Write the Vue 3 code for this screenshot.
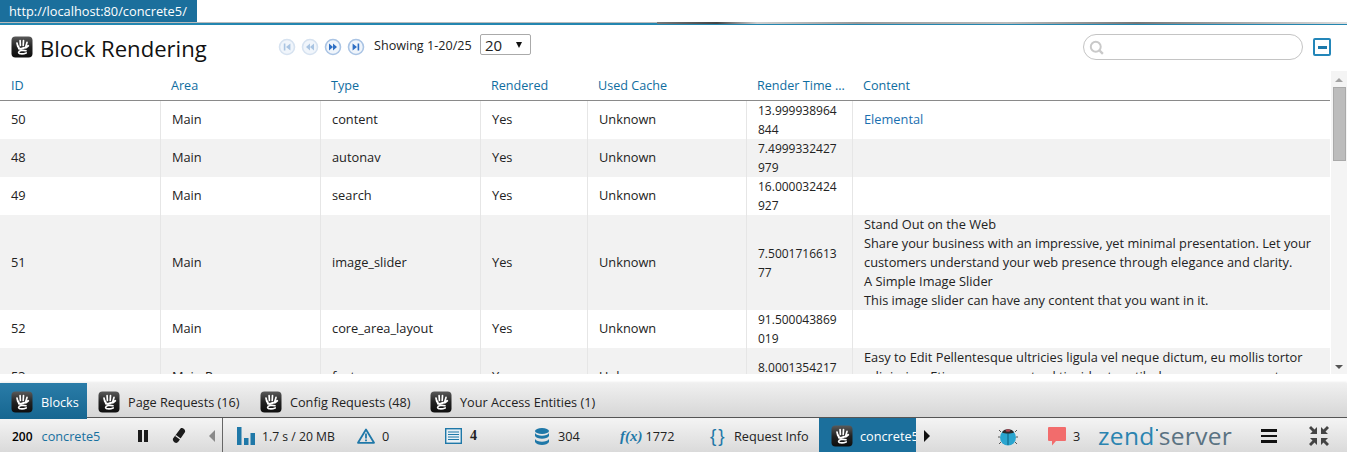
<script setup>
const columns = ['ID', 'Area', 'Type', 'Rendered', 'Used Cache', 'Render Time (ms)', 'Content']
const rows = [
  { id: '50', area: 'Main', type: 'content', time: '13.999938964844', lines: ['Elemental'], link: true },
  { id: '48', area: 'Main', type: 'autonav', time: '7.4999332427979', lines: [] },
  { id: '49', area: 'Main', type: 'search', time: '16.000032424927', lines: [] },
  { id: '51', area: 'Main', type: 'image_slider', time: '7.500171661377', lines: ['Stand Out on the Web', 'Share your business with an impressive, yet minimal presentation. Let your customers understand your web presence through elegance and clarity.', 'A Simple Image Slider', 'This image slider can have any content that you want in it.'] },
  { id: '52', area: 'Main', type: 'core_area_layout', time: '91.500043869019', lines: [] },
  { id: '53', area: 'Main Page', type: 'feature', time: '8.0001354217529', lines: ['Easy to Edit Pellentesque ultricies ligula vel neque dictum, eu mollis tortor adipiscing. Etiam congue, est vel tincidunt vestibulum, nunc nunc porta nulla, at adipiscing neque tellus quis urna.'] },
]
const tabs = ['Blocks', 'Page Requests (16)', 'Config Requests (48)', 'Your Access Entities (1)']
</script>

<template>
  <div class="app">
    <svg class="defs" aria-hidden="true">
      <defs>
        <linearGradient id="c5bg" x1="0" y1="0" x2="0" y2="1">
          <stop offset="0" stop-color="#5a5a5a" />
          <stop offset="0.5" stop-color="#222" />
          <stop offset="1" stop-color="#0d0d0d" />
        </linearGradient>
      </defs>
      <symbol id="c5" viewBox="0 0 22 22">
        <rect x="0.5" y="0.5" width="21" height="21" rx="4" fill="url(#c5bg)" />
        <g fill="none" stroke="#fff" stroke-linecap="round">
          <path d="M6.800 10.500L6 7M9.400 9.500L9.100 4.600M12.200 9.500L12.500 4.600M14.800 10.500L16 6.400" stroke-width="1.700" />
          <path d="M7.400 10.500L8 12.600L10 13L13 11.800L15 11.600L17.200 9.800" stroke-width="2" />
          <path d="M15 14.800C12 14 8 14.500 7.600 16.300C7.400 18 11.600 18.400 15.200 16.900" stroke-width="1.600" />
        </g>
      </symbol>
    </svg>

    <div class="topbar">
      <div class="url">http://localhost:80/concrete5/</div>
      <div class="sliver"></div>
    </div>

    <header class="head">
      <svg class="logo"><use href="#c5" /></svg>
      <h1 class="title">Block Rendering</h1>
      <div class="pager">
        <svg class="pg off" viewBox="0 0 18 18"><circle cx="9" cy="9" r="7.500" /><path d="M5.800 5.500v7h1.600v-7zM12.400 5.500L8 9l4.400 3.500z" /></svg>
        <svg class="pg off" viewBox="0 0 18 18"><circle cx="9" cy="9" r="7.500" /><path d="M9 5.500L5 9l4 3.500zM13 5.500L9 9l4 3.500z" /></svg>
        <svg class="pg" viewBox="0 0 18 18"><circle cx="9" cy="9" r="7.500" /><path d="M5 5.500L9 9l-4 3.500zM9 5.500L13 9l-4 3.500z" /></svg>
        <svg class="pg" viewBox="0 0 18 18"><circle cx="9" cy="9" r="7.500" /><path d="M5.600 5.500L10 9l-4.400 3.500zM10.600 5.500v7h1.600v-7z" /></svg>
      </div>
      <span class="showing">Showing 1-20/25</span>
      <div class="select"><span>20</span><i class="caret"></i></div>
      <div class="search">
        <svg class="glass" viewBox="0 0 18 18" fill="none" stroke="#c9c9c9"><circle cx="7.600" cy="7.600" r="5.600" stroke-width="2.200" /><path d="M12 12l3.600 3.600" stroke-width="2.600" /></svg>
      </div>
      <div class="collapse"><i></i></div>
    </header>

    <div class="body">
      <div class="grid">
        <div class="row th">
          <div v-for="c in columns" :key="c" class="hcell">{{ c }}</div>
        </div>
        <div v-for="r in rows" :key="r.id" class="row tr">
          <div class="cell">{{ r.id }}</div>
          <div class="cell">{{ r.area }}</div>
          <div class="cell">{{ r.type }}</div>
          <div class="cell">Yes</div>
          <div class="cell">Unknown</div>
          <div class="cell time">{{ r.time }}</div>
          <div class="cell content">
            <div v-for="l in r.lines" :key="l" :class="{ link: r.link }">{{ l }}</div>
          </div>
        </div>
      </div>
      <div class="scrollbar">
        <i class="arrow up"></i>
        <div class="thumb"></div>
        <i class="arrow down"></i>
      </div>
    </div>

    <div class="gap"></div>

    <nav class="tabs">
      <div v-for="(t, i) in tabs" :key="t" class="tab" :class="['tab' + i]">
        <svg class="logo"><use href="#c5" /></svg>
        <span>{{ t }}</span>
      </div>
    </nav>

    <footer class="status">
      <div class="s s-code"><b>200</b><span class="blue">concrete5</span></div>
      <div class="s s-pause"><svg width="10" height="12" viewBox="0 0 10 12"><path d="M0 0h4v12H0zM6 0h4v12H6z" fill="#1c1c1c" /></svg></div>
      <div class="s s-erase"><svg width="14" height="16" viewBox="0 0 14 16"><path d="M8.500.6c1-.8 2.400-.6 3.500.4 1.200 1.100 1.500 2.500.7 3.500L6.500 13.600c-1 1.300-2.500 1.700-3.800.8C1 13.300.4 11.600 1.200 10.300z" fill="#1c1c1c" /><path d="M3.500 7.500l5.500 4" stroke="#eee" stroke-width="1.200" /></svg></div>
      <div class="s s-left"><i class="tri-left"></i></div>
      <div class="s s-perf">
        <svg width="18" height="18" viewBox="0 0 18 18" fill="#1f78a8"><path d="M0 0h4.500v18H0zM7 11h4.500v7H7zM13.500 6H18v12h-4.500z" /></svg>
        <span>1.7 s / 20 MB</span>
      </div>
      <div class="s s-warn">
        <svg width="18" height="16" viewBox="0 0 18 16" fill="none"><path d="M9 1.500L17 14.800H1z" stroke="#1f78a8" stroke-width="1.800" stroke-linejoin="round" /><path d="M9 5.500v5M9 11.500v1.700" stroke="#1f78a8" stroke-width="1.800" /></svg>
        <span>0</span>
      </div>
      <div class="s s-doc">
        <svg width="17" height="16" viewBox="0 0 17 16"><rect x=".7" y=".7" width="15.600" height="14.600" fill="#e8f0f5" stroke="#1f78a8" stroke-width="1.400" /><path d="M3 4h11M3 6.500h11M3 9h11M3 11.500h11" stroke="#1f78a8" stroke-width="1.200" /></svg>
        <b class="serif">4</b>
      </div>
      <div class="s s-db">
        <svg width="14" height="17" viewBox="0 0 14 17" fill="#1f78a8"><ellipse cx="7" cy="3" rx="7" ry="3" /><path d="M0 5c1 2 4 2.700 7 2.700S13 7 14 5v3c-1 2-4 2.700-7 2.700S1 10 0 8zM0 11c1 2 4 2.700 7 2.700s6-.7 7-2.700v3c-1 2-4 3-7 3s-6-1-7-3z" /></svg>
        <span>304</span>
      </div>
      <div class="s s-fx"><i class="fx">f(x)</i><span>1772</span></div>
      <div class="s s-req"><span class="braces">{}</span><span>Request Info</span></div>
      <div class="s s-app"><svg class="logo"><use href="#c5" /></svg><span>concrete5</span></div>
      <div class="s s-right"><i class="tri-right"></i></div>
      <div class="s s-bug">
        <svg width="20" height="20" viewBox="0 0 20 20"><path d="M3 6L1 4M17 6l2-2M2 11H0M18 11h2M3 16l-2 2M17 16l2 2" stroke="#555" stroke-width="1" /><ellipse cx="10" cy="11.500" rx="8" ry="8" fill="#2aa5cf" /><path d="M4 6.500C5 2 15 2 16 6.500C13 8 7 8 4 6.500z" fill="#2b2b2b" /><ellipse cx="10" cy="4.500" rx="2.400" ry="1.200" fill="#b0424e" /><path d="M10 7.500v11.500" stroke="#126a8a" stroke-width="1.200" /></svg>
      </div>
      <div class="s s-msg">
        <svg width="18" height="19" viewBox="0 0 18 19"><path d="M1 0h16a1 1 0 0 1 1 1v12a1 1 0 0 1-1 1H8l-4 4.500V14H1a1 1 0 0 1-1-1V1a1 1 0 0 1 1-1z" fill="#f26c6c" /></svg>
        <span>3</span>
      </div>
      <div class="s s-zend"><span class="zend">zend</span><i class="zdot"></i><span class="server">server</span></div>
      <div class="s s-menu"><i></i><i></i><i></i></div>
      <div class="s s-shrink">
        <svg width="20" height="20" viewBox="0 0 20 20" fill="#444"><path d="M0 2l2-2 3.500 3.500L8 1v7H1l2.500-2.500zM20 2l-2-2-3.500 3.500L12 1v7h7l-2.500-2.500zM0 18l2 2 3.500-3.500L8 19v-7H1l2.500 2.500zM20 18l-2 2-3.500-3.500L12 19v-7h7l-2.500 2.500z" /></svg>
      </div>
    </footer>
  </div>
</template>

<style>
html, body { margin: 0; background: #fff; }
</style>

<style scoped>
.app {
  width: 1347px;
  height: 452px;
  overflow: hidden;
  display: flex;
  flex-direction: column;
  font-family: "Open Sans", sans-serif;
  font-size: 12.700px;
  color: #222;
  background: #fff;
}
.defs { position: absolute; width: 0; height: 0; }
.logo { width: 22px; height: 22px; flex: none; display: block; }

.topbar {
  height: 25px;
  flex: none;
  box-sizing: border-box;
  border-bottom: 2px solid #2386b0;
  display: flex;
  align-items: flex-end;
  position: relative;
  box-shadow: inset 0 -1px 0 #bbb;
}
.url {
  width: 197px;
  height: 22px;
  margin-bottom: 1px;
  box-sizing: border-box;
  padding-left: 9px;
  background: #1b6f9c;
  color: #fff;
  font-size: 12.800px;
  line-height: 22px;
  white-space: nowrap;
}
.sliver {
  flex: 1;
  height: 2px;
  margin-left: 460px;
  margin-bottom: -1px;
  background: linear-gradient(90deg, #777 0, #444 60px, #cfcfcf 100px, #999 200px, #bbb 350px, #777 480px, #ddd 690px);
}

.head {
  height: 45px;
  flex: none;
  display: flex;
  align-items: flex-start;
  position: relative;
}
.head > .logo { margin: 11px 0 0 11px; }
.title {
  margin: 7px 0 0 7px;
  width: 238px;
  font-size: 22.100px;
  font-weight: 400;
  line-height: 32px;
  color: #111;
  white-space: nowrap;
}
.pager { display: flex; gap: 5px; margin-top: 13px; width: 96px; }
.pg { width: 18px; height: 18px; flex: none; }
.pg circle { fill: #f0f5fb; stroke: #aac4e4; stroke-width: 1.600; }
.pg path { fill: #2f6fc4; }
.pg.off circle { stroke: #d6e2f0; }
.pg.off path { fill: #a9c4e2; }
.showing { margin-top: 13px; width: 106px; line-height: 16px; white-space: nowrap; font-size: 12.600px; }
.select {
  margin-top: 9px;
  width: 51px;
  height: 21px;
  box-sizing: border-box;
  border: 1px solid #aaa;
  border-radius: 2px;
  display: flex;
  align-items: center;
  justify-content: space-between;
  padding: 0 8px 0 4px;
  font-size: 15px;
}
.caret {
  border-left: 3.500px solid transparent;
  border-right: 3.500px solid transparent;
  border-top: 6px solid #111;
}
.search {
  margin: 9px 0 0 552px;
  width: 220px;
  height: 26px;
  box-sizing: border-box;
  border: 1px solid #c4c4c4;
  border-radius: 13px;
  padding: 5px 0 0 5px;
}
.glass { width: 16px; height: 16px; display: block; }
.collapse {
  margin: 13px 0 0 10px;
  width: 18px;
  height: 18px;
  box-sizing: border-box;
  border: 2px solid #2386b9;
  border-radius: 2px;
  display: flex;
  align-items: center;
  justify-content: center;
}
.collapse i { width: 9px; height: 3px; background: #1c78aa; }

.body {
  height: 304px;
  flex: none;
  display: flex;
  overflow: hidden;
}
.grid { width: 1330px; flex: none; }
.row {
  display: grid;
  grid-template-columns: 160px 160px 160px 107px 159px 106px 478px;
}
.th { height: 30px; border-bottom: 1px solid #8a8a8a; }
.hcell {
  padding: 1px 7px 0 11px;
  color: #0f6d9f;
  font-size: 12.600px;
  white-space: nowrap;
  overflow: hidden;
  text-overflow: ellipsis;
  line-height: 29px;
}
.tr { line-height: 19px; font-size: 12.800px; }
.tr:nth-child(odd) { background: #f2f2f2; }
.cell {
  box-sizing: border-box;
  border-left: 1px solid #e6e6e6;
  padding: 0 9px 1px 11px;
  display: flex;
  align-items: center;
  min-height: 38px;
}
.cell:first-child { border-left: 0; }
.time { word-break: break-all; font-size: 12px; padding-bottom: 0; }
.content { display: block; padding: 0 18px 0 11px; }
.link { color: #1a6fb0; line-height: 37px; }
.scrollbar {
  margin: 1px 0 0 1px;
  width: 16px;
  height: 303px;
  background: #f4f4f4;
  display: flex;
  flex-direction: column;
  align-items: center;
}
.arrow { border-left: 4px solid transparent; border-right: 4px solid transparent; }
.arrow.up { border-bottom: 4px solid #a3a3a3; margin-top: 7px; }
.arrow.down { border-top: 4px solid #555; margin-top: auto; margin-bottom: 5px; }
.thumb {
  margin-top: 5px;
  width: 13px;
  height: 74px;
  box-sizing: border-box;
  background: #bcbcbc;
  border: 1px solid #a9a9a9;
}

.gap { height: 9px; flex: none; }

.tabs {
  height: 35px;
  flex: none;
  box-sizing: border-box;
  border-bottom: 1px solid #555;
  background: linear-gradient(#f0f0f0, #d6d6d6);
  box-shadow: 0 -1px 2px rgba(0, 0, 0, .08);
  display: flex;
  position: relative;
  z-index: 1;
}
.tab { display: flex; align-items: center; gap: 8px; height: 36px; padding: 2px 0 0 11px; box-sizing: border-box; white-space: nowrap; }
.tab0 { width: 87px; background: linear-gradient(#2a7ca8, #166690); color: #fff; }
.tab1 { width: 162px; }
.tab2 { width: 170px; }

.status {
  height: 34px;
  flex: none;
  display: flex;
  align-items: center;
  background: linear-gradient(#f4f4f4, #dadada);
  white-space: nowrap;
}
.s { display: flex; align-items: center; height: 100%; box-sizing: border-box; flex: none; padding-top: 2px; }
.s b { font-weight: 600; }
.blue { color: #17709f; }
.s-code { width: 138px; padding-left: 12px; gap: 9px; }
.s-code b { font-size: 12px; color: #000; }
.s-pause { width: 34px; }
.s-erase { width: 37px; }
.s-left { width: 13px; }
.tri-left { border: 6px solid transparent; border-left: 0; border-right: 6px solid #8a8a8a; }
.s-perf { width: 135px; padding-left: 14px; gap: 7px; border-left: 1px solid #666; font-size: 12.200px; }
.s-warn { width: 88px; gap: 7px; }
.s-doc { width: 90px; gap: 8px; }
.serif { font-family: "Liberation Serif", serif; font-size: 14px; }
.s-db { width: 85px; gap: 9px; }
.fx { font-family: "Liberation Serif", serif; font-size: 15px; color: #1f78a8; font-weight: 700; }
.s-fx { width: 90px; gap: 3px; }
.s-req { width: 109px; gap: 9px; }
.braces { color: #1f78a8; font-family: "Liberation Sans", sans-serif; font-size: 19px; line-height: 18px; width: 15px; letter-spacing: 2px; }
.s-app { width: 97px; padding-left: 12px; gap: 7px; background: #1b6f9c; color: #fff; overflow: hidden; }
.s-right { width: 82px; padding-left: 8px; }
.tri-right { border: 6px solid transparent; border-right: 0; border-left: 6px solid #111; }
.s-bug { width: 50px; }
.s-msg { width: 50px; gap: 7px; }
.s-zend { width: 163px; font-size: 24.500px; padding-top: 0; letter-spacing: .35px; }
.zend { color: #2a84b0; font-weight: 500; }
.zdot { width: 2px; height: 2px; background: #2a84b0; margin: -10px 1px 0; }
.server { color: #5a7282; font-weight: 500; }
.s-menu { width: 48px; flex-direction: column; justify-content: center; align-items: flex-start; gap: 3px; }
.s-menu i { width: 16px; height: 2.500px; background: #111; display: block; }
.s-shrink { width: 20px; }
</style>
